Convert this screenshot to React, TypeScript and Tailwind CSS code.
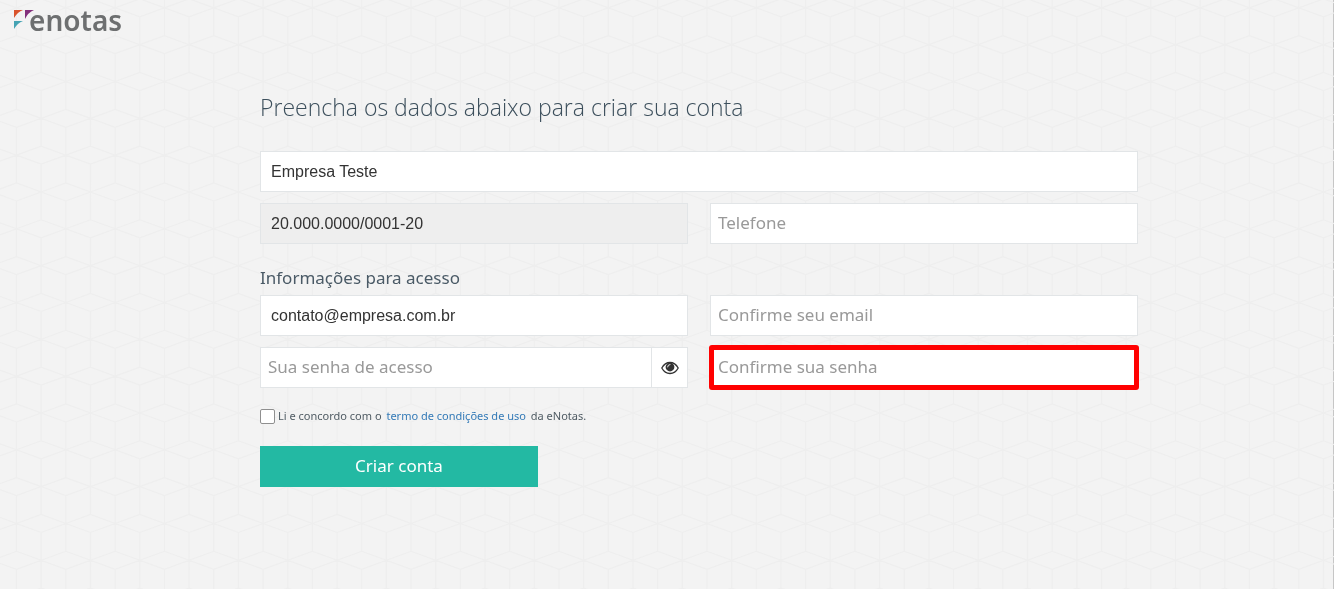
import type { InputHTMLAttributes } from 'react';

const fieldBase =
  'block h-[41px] w-full min-w-0 border border-[#e2e5e7] pr-2 outline-none placeholder:font-["Noto_Sans"] placeholder:text-[17px] placeholder:text-[#999999] placeholder:opacity-100';
const filled = 'pl-[10px] font-["Liberation_Sans",Arial,sans-serif] text-[16px] text-[#333333]';
const empty = 'pb-[2px] pl-[7px] font-["Noto_Sans",sans-serif] text-[17px] text-[#333333]';

function Field({ className = '', ...props }: InputHTMLAttributes<HTMLInputElement>) {
  const look = props.defaultValue ? filled : empty;
  const surface = props.readOnly ? 'bg-[#eeeeee]' : 'bg-white';
  return <input {...props} className={`${fieldBase} ${look} ${surface} ${className}`} />;
}

// Half the width of a cube, the distance between two rows, and half the height of a cube's lid.
const HALF = 24.66;
const ROW = 36.83;
const LID = 9;

function cubePath(columns: number, rows: number) {
  const parts: string[] = [];
  for (let r = 0; r < rows; r++) {
    const y = -29 + r * ROW;
    for (let c = r % 2; c < columns; c += 2) {
      const x = -57.5 + c * HALF;
      parts.push(`M${x} ${y}l${HALF} ${-LID}l${HALF} ${LID}l${-HALF} ${LID}z`);
      parts.push(`M${x + HALF} ${y + LID}v${2 * (ROW - LID)}`);
    }
  }
  return parts.join('');
}

const cubes = cubePath(110, 50);

function CubePattern() {
  return (
    <svg aria-hidden="true" className="pointer-events-none fixed inset-0 -z-10 h-full w-full">
      <path d={cubes} fill="none" stroke="#eeeeee" strokeWidth="1.2" />
    </svg>
  );
}

function Logo() {
  return (
    <a href="#" aria-label="enotas" className="flex h-10 items-start pl-[14px] text-[#6d6f70]">
      <svg aria-hidden="true" width="20" height="20" viewBox="0 0 20 20" className="mt-[10px] -mr-[5px] shrink-0">
        <path d="M0 0H9Q3.5 2 0 8Z" fill="#d9532c" />
        <path d="M11 0H20Q14 2.5 11 9Z" fill="#83307c" />
        <path d="M0 11H9Q3.5 13 0 19Z" fill="#45a3b3" />
      </svg>
      <span className='font-["Noto_Sans",sans-serif] text-[28px] leading-10 font-semibold'>enotas</span>
    </a>
  );
}

function EyeIcon() {
  return (
    <svg aria-hidden="true" width="18" height="14" viewBox="0 0 18 14">
      <path d="M.8 7C2.8 3.3 5.6 1.5 9 1.5S15.2 3.3 17.2 7C15.2 10.7 12.4 12.5 9 12.5S2.8 10.7 .8 7Z" fill="#fff" stroke="#333" strokeWidth="1.3" />
      <circle cx="9" cy="6" r="4.4" fill="#333" />
      <path d="M6.6 5.9A2.5 2.5 0 0 1 9 3.5" fill="none" stroke="#fff" strokeWidth="0.9" strokeLinecap="round" />
    </svg>
  );
}

export default function App() {
  return (
    <div className='relative isolate min-h-screen border-r border-[#c6c6c6] bg-[#f3f3f3] font-["Noto_Sans",sans-serif] text-[#4a5a66]'>
      <CubePattern />
      <header>
        <Logo />
      </header>
      <main className="px-4 pt-[47px] pb-16 lg:pr-[195px] lg:pl-[260px]">
        <h1 className='font-["Open_Sans",sans-serif] text-[23px] leading-10 font-light text-[#3c4f5c]'>
          Preencha os dados abaixo para criar sua conta
        </h1>
        <form className="mt-6" onSubmit={(e) => e.preventDefault()}>
          <Field aria-label="Nome da empresa" defaultValue="Empresa Teste" />
          <div className="mt-[11px] grid grid-cols-2 gap-[22px]">
            <Field aria-label="CNPJ" defaultValue="20.000.0000/0001-20" readOnly />
            <Field type="tel" aria-label="Telefone" placeholder="Telefone" />
          </div>
          <h2 className="mt-[21px] text-[17px] leading-[26px]">Informações para acesso</h2>
          <div className="mt-1 grid grid-cols-2 gap-x-[22px] gap-y-[11px]">
            <Field type="email" aria-label="Email" defaultValue="contato@empresa.com.br" />
            <Field type="email" aria-label="Confirme seu email" placeholder="Confirme seu email" />
            <div className="flex">
              <Field type="password" aria-label="Sua senha de acesso" placeholder="Sua senha de acesso" />
              <button
                type="button"
                aria-label="Mostrar senha"
                className="flex h-[41px] w-9 shrink-0 items-center justify-center border border-l-0 border-[#e2e5e7] bg-white"
              >
                <EyeIcon />
              </button>
            </div>
            <div className="relative">
              <Field type="password" aria-label="Confirme sua senha" placeholder="Confirme sua senha" />
              <div className="pointer-events-none absolute -inset-x-px -inset-y-[2px] rounded-[3px] border-5 border-[#ff0000]" />
            </div>
          </div>
          <div className="mt-[18px] flex h-5 items-center text-[11px] text-[#4f5b63]">
            <input
              id="terms"
              type="checkbox"
              className="mr-[3px] size-[15px] shrink-0 appearance-none rounded-[2px] border border-[#8f8f8f] bg-white checked:bg-[#23b9a3]"
            />
            <label htmlFor="terms">
              Li e concordo com o{' '}
              <a href="#" className="mx-[2px] text-[#337ab7]">
                termo de condições de uso
              </a>{' '}
              da eNotas.
            </label>
          </div>
          <button type="submit" className="mt-5 h-[41px] w-[278px] bg-[#23b9a3] pb-[2px] text-[17px] text-white">
            Criar conta
          </button>
        </form>
      </main>
    </div>
  );
}
